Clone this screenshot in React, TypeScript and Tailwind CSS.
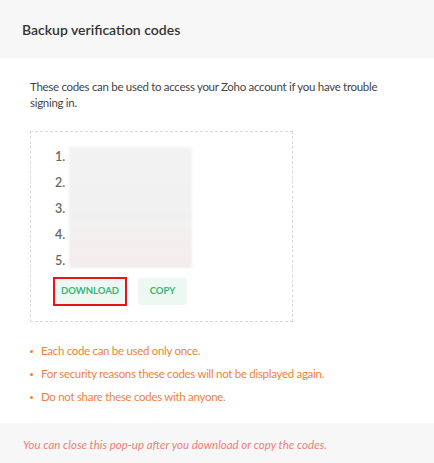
import React from "react";

export default function App() {
  const rows = [1, 2, 3, 4, 5];
  return (
    <div className="w-[434px] h-[463px] bg-white flex flex-col overflow-hidden" style={{ fontFamily: "Lato, 'Noto Sans', sans-serif" }}>
      <div className="h-[58px] shrink-0 bg-[#f7f7f7] px-[22px] flex items-center">
        <h1 className="text-[14px] font-semibold text-[#333]">Backup verification codes</h1>
      </div>
      <div className="flex-1 px-[30px] pt-[21px]">
        <p className="text-[11.5px] leading-[16px] tracking-[-0.3px] text-[#444] pr-[10px]">
          These codes can be used to access your Zoho account if you have trouble signing in.
        </p>
        <div className="mt-[20px] w-[263px] h-[191px] border border-dashed border-[#d9d9d9] pl-[24px] pt-[12px]">
          <div className="flex">
            <div className="flex flex-col">
              {rows.map((n) => (
                <div key={n} className="h-[26px] flex items-center text-[12.5px] font-semibold text-[#666] w-[14px]">
                  {n}.
                </div>
              ))}
            </div>
            <div className="mt-[3px] w-[123px] h-[121px] bg-gradient-to-b from-[#f3f3f3] via-[#f1f1f1] to-[#f5eded] blur-[1px]" />
          </div>
          <div className="mt-[3px] flex items-start gap-[11px] -ml-[2px]">
            <button className="w-[74px] h-[29px] border-2 border-[#e8141c] bg-[#eef8f3] text-[9.5px] font-bold text-[#34b676] flex items-center justify-center">
              DOWNLOAD
            </button>
            <button className="mt-[1px] w-[49px] h-[27px] rounded-[3px] bg-[#eef8f3] text-[9.5px] font-bold text-[#34b676] flex items-center justify-center">
              COPY
            </button>
          </div>
        </div>
        <ul className="mt-[21px] flex flex-col gap-[7px] text-[11.5px] leading-[16px] tracking-[-0.3px] text-[#f0823c]">
          <li className="flex items-center"><span className="w-[3px] h-[3px] rounded-full bg-[#f0823c] mr-[8px]" />Each code can be used only once.</li>
          <li className="flex items-center"><span className="w-[3px] h-[3px] rounded-full bg-[#f0823c] mr-[8px]" />For security reasons these codes will not be displayed again.</li>
          <li className="flex items-center"><span className="w-[3px] h-[3px] rounded-full bg-[#f0823c] mr-[8px]" />Do not share these codes with anyone.</li>
        </ul>
      </div>
      <div className="h-[40px] shrink-0 bg-[#f7f7f7] px-[23px] flex items-center pt-[4px]">
        <p className="text-[11.5px] italic text-[#f47b7b]">You can close this pop-up after you download or copy the codes.</p>
      </div>
    </div>
  );
}
